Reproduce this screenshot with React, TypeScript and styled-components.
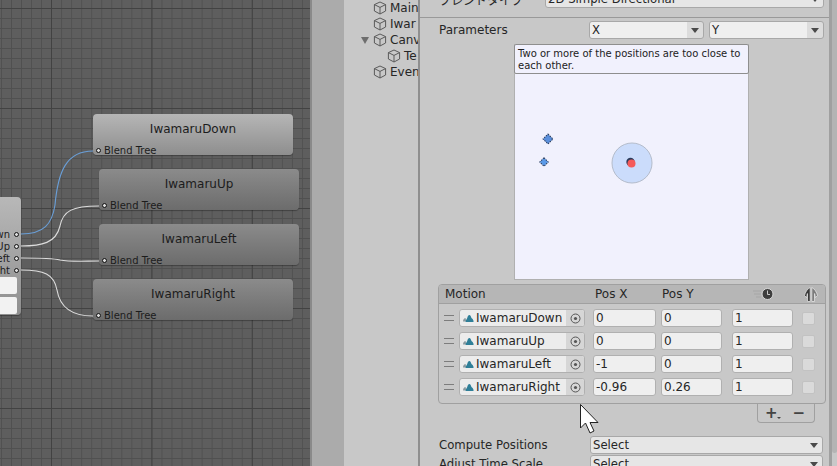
import React from "react";
import styled, { createGlobalStyle } from "styled-components";

const Global = createGlobalStyle`
  html, body { margin: 0; padding: 0; background: #c8c8c8; }
  body { font-family: "DejaVu Sans", "Noto Sans CJK JP", sans-serif; font-size: 12px; color: #262626; }
`;

const Page = styled.div`
  position: relative;
  display: flex;
  width: 837px;
  height: 466px;
  overflow: hidden;
`;

const Canvas = styled.div`
  position: relative;
  flex: 0 0 310px;
  height: 100%;
  overflow: hidden;
  background-color: #5e5e5e;
  background-image:
    linear-gradient(to right, #424242 1px, transparent 1px),
    linear-gradient(to bottom, #424242 1px, transparent 1px),
    linear-gradient(to right, #505050 1px, transparent 1px),
    linear-gradient(to bottom, #505050 1px, transparent 1px);
  background-size: 100.4px 100px, 100.4px 100px, 10.04px 10px, 10.04px 10px;
  background-position: 51px 8px, 51px 8px, 1px 8px, 1px 8px;
`;

const Wires = styled.svg`
  position: absolute;
  left: 0;
  top: 0;
  width: 310px;
  height: 466px;
  z-index: 2;
`;

const Node = styled.div<{ $x: number; $y: number; $active?: boolean }>`
  position: absolute;
  left: ${(p) => p.$x}px;
  top: ${(p) => p.$y}px;
  width: 200px;
  height: 41px;
  border-radius: 4px;
  background: ${(p) =>
    p.$active
      ? "linear-gradient(#b6b6b6, #8e8e8e)"
      : "linear-gradient(#8b8b8b, #6c6c6c)"};
  box-shadow: 0 1px 1px rgba(0, 0, 0, 0.3);
  color: #1c1c1c;
`;

const NodeTitle = styled.div`
  text-align: center;
  font-size: 12px;
  line-height: 16px;
  padding-top: 7px;
`;

const NodePort = styled.div`
  position: absolute;
  left: 3px;
  bottom: -2px;
  display: flex;
  align-items: center;
  gap: 3px;
  font-size: 10px;
  line-height: 13px;
  color: #1c1c1c;
`;

const Dot = styled.span`
  width: 3px;
  height: 3px;
  border: 1px solid #111;
  border-radius: 50%;
  background: #ddd;
  flex: none;
`;

const BaseNode = styled.div`
  position: absolute;
  left: -60px;
  top: 197px;
  width: 81px;
  height: 118px;
  box-sizing: border-box;
  padding: 31px 2px 0 0;
  border-radius: 4px;
  background: linear-gradient(#b8b8b8, #8f8f8f);
  box-shadow: 0 1px 1px rgba(0, 0, 0, 0.3);
  display: flex;
  flex-direction: column;
  align-items: flex-end;
`;

const OutPort = styled.div`
  display: flex;
  align-items: center;
  gap: 4px;
  height: 12px;
  font-size: 10px;
  color: #1c1c1c;
`;

const BaseField = styled.div`
  width: 77px;
  height: 17px;
  margin-top: 3px;
  border-radius: 2px;
  background: #f2f2f2;
  &:first-of-type { margin-top: 0; }
`;

const BaseFields = styled.div`
  display: flex;
  flex-direction: column;
  margin-top: 1px;
  margin-right: 2px;
`;

const Splitter = styled.div`
  flex: 0 0 2px;
  background: #8a8a8a;
`;

const Gutter = styled.div`
  flex: 0 0 32px;
  background: #ababab;
`;

const Hierarchy = styled.div`
  flex: 0 0 74px;
  box-sizing: border-box;
  background: #c8c8c8;
  overflow: hidden;
`;

const TreeRow = styled.div<{ $level?: number }>`
  display: flex;
  align-items: center;
  gap: 3px;
  height: 16px;
  padding-left: ${(p) => 29 + (p.$level ?? 0) * 14}px;
  position: relative;
  font-size: 12px;
  white-space: nowrap;
`;

const Arrow = styled.span`
  position: absolute;
  left: 17px;
  top: 5px;
  width: 0;
  height: 0;
  border-left: 4px solid transparent;
  border-right: 4px solid transparent;
  border-top: 7px solid #6e6e6e;
`;

const InspectorEdge = styled.div`
  flex: 0 0 2px;
  background: #8f8f8f;
`;

const Inspector = styled.div`
  flex: 0 0 409px;
  box-sizing: border-box;
  background: #c8c8c8;
  overflow: hidden;
  height: 100%;
`;

const TopRow = styled.div`
  display: flex;
  align-items: center;
  height: 18px;
  margin-top: -10px;
  padding: 0 5px 0 19px;
`;

const TopLabel = styled.div`
  flex: 0 0 106px;
  font-size: 12px;
`;

const Dropdown = styled.div<{ $w?: number }>`
  position: relative;
  box-sizing: border-box;
  flex: ${(p) => (p.$w ? `0 0 ${p.$w}px` : "1")};
  height: 18px;
  line-height: 16px;
  padding-left: 2px;
  border: 1px solid #a8a8a8;
  border-radius: 3px;
  background: #e6e6e6;
  font-size: 11.7px;
  white-space: nowrap;
  &::after {
    content: "";
    position: absolute;
    right: 4px;
    top: 6px;
    width: 0;
    height: 0;
    border-left: 4px solid transparent;
    border-right: 4px solid transparent;
    border-top: 5px solid #4a4a4a;
  }
`;

const ParamDropdown = styled(Dropdown)`
  background: linear-gradient(to right, #efefef calc(100% - 16px), #dcdcdc calc(100% - 16px));
`;

const Separator = styled.div`
  height: 1px;
  margin-top: 9px;
  background: #999;
`;

const ParamRow = styled.div`
  display: flex;
  align-items: center;
  gap: 5px;
  margin-top: 3px;
  height: 18px;
  padding: 0 6px 0 19px;
`;

const ParamLabel = styled.div`
  flex: 0 0 145px;
  font-size: 12px;
`;

const Graph = styled.div`
  position: relative;
  width: 235px;
  height: 236px;
  box-sizing: border-box;
  margin: 5px 0 0 94px;
  background: #f1f1fd;
  border: 1px solid #b0b0b0;
  border-width: 0 1px 1px 1px;
`;

const Message = styled.div`
  box-sizing: border-box;
  margin: 0 -1px;
  height: 30px;
  padding: 3px 3px 0;
  background: #f1f1fd;
  border: 1px solid #8e8e8e;
  border-radius: 2px;
  font-size: 10px;
  line-height: 12px;
  color: #222;
`;

const GraphDrawing = styled.svg`
  display: block;
  width: 233px;
  height: 205px;
`;

const List = styled.div`
  box-sizing: border-box;
  margin: 4px 0 0 18px;
  width: 388px;
  height: 120px;
  border: 1px solid #a0a0a0;
  border-radius: 4px;
`;

const ListHeader = styled.div`
  display: grid;
  grid-template-columns: 150px 67px 91px 51px 1fr;
  align-items: center;
  height: 18px;
  padding-left: 6px;
  background: #b6b6b6;
  border-bottom: 1px solid #a0a0a0;
  border-radius: 3px 3px 0 0;
  font-size: 12px;
`;

const HeaderIcon = styled.svg`
  display: block;
`;

const Rows = styled.div`
  display: flex;
  flex-direction: column;
  gap: 5px;
  padding-top: 5px;
`;

const Row = styled.div`
  display: flex;
  align-items: center;
  height: 18px;
  padding-left: 5px;
`;

const Handle = styled.span`
  display: block;
  flex: 0 0 10px;
  height: 6px;
  box-sizing: border-box;
  border-top: 1px solid #7d7d7d;
  border-bottom: 1px solid #7d7d7d;
`;

const MotionField = styled.div`
  display: flex;
  align-items: center;
  box-sizing: border-box;
  height: 18px;
  margin-left: 5px;
  flex: 0 0 126px;
  border: 1px solid #b0b0b0;
  border-radius: 3px;
  background: #ececec;
  font-size: 12px;
  overflow: hidden;
`;

const MotionName = styled.span`
  flex: 1;
  display: flex;
  align-items: center;
  gap: 1px;
  padding-left: 3px;
  white-space: nowrap;
  overflow: hidden;
`;

const Target = styled.span`
  flex: 0 0 18px;
  height: 100%;
  display: flex;
  align-items: center;
  justify-content: center;
  background: #d6d6d6;
`;

const NumField = styled.div<{ $ml: number; $w: number }>`
  box-sizing: border-box;
  flex: 0 0 ${(p) => p.$w}px;
  margin-left: ${(p) => p.$ml}px;
  height: 18px;
  line-height: 17px;
  padding-left: 2px;
  border: 1px solid #b0b0b0;
  border-radius: 3px;
  background: #efefef;
  font-size: 12px;
`;

const Check = styled.span`
  display: block;
  flex: 0 0 13px;
  height: 13px;
  margin-left: 9px;
  background: #dadada;
  border: 1px solid #c2c2c2;
  border-radius: 2px;
  box-sizing: border-box;
`;

const Footer = styled.div`
  box-sizing: border-box;
  display: flex;
  align-items: center;
  justify-content: center;
  gap: 15px;
  width: 58px;
  height: 19px;
  margin: 0 0 0 337px;
  padding-right: 2px;
  border: 1px solid #a0a0a0;
  border-top: 0;
  border-radius: 0 0 4px 4px;
  font-size: 15px;
  font-weight: 700;
  color: #444;
`;

const PlusMark = styled.span`
  position: relative;
  line-height: 14px;
  &::after {
    content: "";
    position: absolute;
    right: -3px;
    bottom: 1px;
    width: 0;
    height: 0;
    border-left: 2px solid transparent;
    border-right: 2px solid transparent;
    border-top: 2px solid #444;
  }
`;

const FormRow = styled.div<{ $mt: number }>`
  display: flex;
  align-items: center;
  height: 18px;
  margin-top: ${(p) => p.$mt}px;
  padding: 0 6px 0 19px;
`;

const FormLabel = styled.div`
  flex: 0 0 151px;
  font-size: 11.7px;
  white-space: nowrap;
`;

const RightBar = styled.div`
  flex: 0 0 3px;
  background: #a0a0a0;
`;

const RightEnd = styled.div`
  flex: 1;
  background: #c8c8c8;
`;

const Thumb = styled.div`
  height: 453px;
  background: #b4b4b4;
  border-radius: 0 0 3px 3px;
`;

const Cursor = styled.svg`
  position: absolute;
  left: 580px;
  top: 404px;
  z-index: 5;
`;

const Cube = () => (
  <svg width="14" height="14" viewBox="0 0 14 14" fill="none" stroke="#5a5a5a" strokeWidth="1" style={{ flex: "none" }}>
    <path d="M7 1 L12.6 3.6 V10 L7 13 L1.4 10 V3.6 Z" />
    <path d="M1.4 3.6 L7 6.4 L12.6 3.6 M7 6.4 V13" />
  </svg>
);

const MotionIcon = () => (
  <svg width="11" height="9" viewBox="0 0 13 10" style={{ flex: "none", marginRight: 1 }}>
    <path d="M0 8.5 C0 6 1.5 4.5 3 4.5 L4 8.5 Z" fill="#8a9aa0" />
    <path d="M3 9 C3.5 6.5 4.5 6 5 4.5 C5.5 2.5 6.5 1 7.5 1 C8.8 1 9.5 3 10 4.5 C11.5 5.5 12.5 7 12.5 9 Z" fill="#2f7f98" />
  </svg>
);

const TargetIcon = () => (
  <svg width="11" height="11" viewBox="0 0 11 11" fill="none">
    <circle cx="5.5" cy="5.5" r="4.5" stroke="#555" />
    <circle cx="5.5" cy="5.5" r="1.6" fill="#555" />
  </svg>
);

const SpeedIcon = () => (
  <HeaderIcon width="21" height="12" viewBox="0 0 21 12">
    <path d="M0 3 H8 M1 6 H8 M3 9 H8" stroke="#a6a6a6" strokeWidth="1" />
    <circle cx="14.5" cy="6" r="5.5" fill="#3e3e3e" stroke="#d8d8d8" strokeWidth="1" />
    <path d="M14.5 2.5 V6.5 H17" stroke="#c8c8c8" strokeWidth="1" fill="none" />
  </HeaderIcon>
);

const MirrorIcon = () => (
  <HeaderIcon width="14" height="15" viewBox="0 0 14 15">
    <path d="M6.2 0.5 C3.4 1.6 1.2 5.4 0.5 8.5 L2.6 10.5 L3.4 6.5 L3.6 14.5 H6.2 Z" fill="#3a3a3a" stroke="#efefef" strokeWidth="0.7" />
    <path d="M7.8 0.5 C10.6 1.6 12.8 5.4 13.5 8.5 L11.4 10.5 L10.6 6.5 L10.4 14.5 H7.8 Z" fill="#7c7c7c" stroke="#efefef" strokeWidth="0.7" />
  </HeaderIcon>
);

const motions = [
  { name: "IwamaruDown", x: "0", y: "0" },
  { name: "IwamaruUp", x: "0", y: "0" },
  { name: "IwamaruLeft", x: "-1", y: "0" },
  { name: "IwamaruRight", x: "-0.96", y: "0.26" },
];

const nodes = [
  { name: "IwamaruDown", x: 93, y: 114, active: true },
  { name: "IwamaruUp", x: 99, y: 169 },
  { name: "IwamaruLeft", x: 99, y: 224 },
  { name: "IwamaruRight", x: 93, y: 279 },
];

export default function App() {
  return (
    <Page>
      <Global />
      <Canvas>
        {nodes.map((n) => (
          <Node key={n.name} $x={n.x} $y={n.y} $active={n.active}>
            <NodeTitle>{n.name}</NodeTitle>
            <NodePort>
              <Dot />
              Blend Tree
            </NodePort>
          </Node>
        ))}
        <BaseNode>
          <OutPort>own<Dot /></OutPort>
          <OutPort>Up<Dot /></OutPort>
          <OutPort>eft<Dot /></OutPort>
          <OutPort>ght<Dot /></OutPort>
          <BaseFields>
            <BaseField />
            <BaseField />
          </BaseFields>
        </BaseNode>
        <Wires viewBox="0 0 310 466" fill="none" strokeWidth="1.1">
          <path d="M21 234 C 44 234 52 224 55 205 C 58 172 66 151 93 151" stroke="#6a9fd8" />
          <path d="M21 246 C 42 246 56 243 60 226 C 63 211 72 206 99 206" stroke="#dcdcdc" />
          <path d="M21 258 C 44 258 52 258 60 260 C 70 262 85 261 99 261" stroke="#dcdcdc" />
          <path d="M21 270 C 44 270 54 274 57 290 C 60 308 72 316 93 316" stroke="#dcdcdc" />
        </Wires>
      </Canvas>
      <Splitter />
      <Gutter />
      <Hierarchy>
        <TreeRow><Cube />Main</TreeRow>
        <TreeRow><Cube />Iwar</TreeRow>
        <TreeRow><Arrow /><Cube />Canv</TreeRow>
        <TreeRow $level={1}><Cube />Te</TreeRow>
        <TreeRow><Cube />Even</TreeRow>
      </Hierarchy>
      <InspectorEdge />
      <Inspector>
        <TopRow>
          <TopLabel>ブレンドタイプ</TopLabel>
          <Dropdown>2D Simple Directional</Dropdown>
        </TopRow>
        <Separator />
        <ParamRow>
          <ParamLabel>Parameters</ParamLabel>
          <ParamDropdown $w={115}>X</ParamDropdown>
          <ParamDropdown $w={115}>Y</ParamDropdown>
        </ParamRow>
        <Graph>
          <Message>Two or more of the positions are too close to each other.</Message>
          <GraphDrawing viewBox="0 0 233 205">
            <circle cx="117" cy="89" r="20" fill="#cbdcfb" stroke="#b4bccb" />
            <rect x="-3.5" y="-3.5" width="7" height="7" transform="translate(33 65) rotate(45)" fill="#5b8fdc" stroke="#2a3c5c" strokeDasharray="1.5 1" />
            <rect x="-3" y="-3" width="6" height="6" transform="translate(29 88) rotate(45)" fill="#5b9ae8" stroke="#2a3c5c" strokeDasharray="1.5 1" />
            <circle cx="115.5" cy="88" r="4.2" fill="#2a3c5c" />
            <circle cx="116.5" cy="89.5" r="4" fill="#f55a5a" />
          </GraphDrawing>
        </Graph>
        <List>
          <ListHeader>
            <span>Motion</span>
            <span>Pos X</span>
            <span>Pos Y</span>
            <SpeedIcon />
            <MirrorIcon />
          </ListHeader>
          <Rows>
            {motions.map((m) => (
              <Row key={m.name}>
                <Handle />
                <MotionField>
                  <MotionName><MotionIcon />{m.name}</MotionName>
                  <Target><TargetIcon /></Target>
                </MotionField>
                <NumField $ml={8} $w={63}>{m.x}</NumField>
                <NumField $ml={5} $w={61}>{m.y}</NumField>
                <NumField $ml={10} $w={61}>1</NumField>
                <Check />
              </Row>
            ))}
          </Rows>
        </List>
        <Footer>
          <PlusMark>+</PlusMark>
          <span>−</span>
        </Footer>
        <FormRow $mt={13}>
          <FormLabel>Compute Positions</FormLabel>
          <Dropdown>Select</Dropdown>
        </FormRow>
        <FormRow $mt={1}>
          <FormLabel>Adjust Time Scale</FormLabel>
          <Dropdown>Select</Dropdown>
        </FormRow>
      </Inspector>
      <RightBar />
      <RightEnd><Thumb /></RightEnd>
      <Cursor width="20" height="30" viewBox="0 0 20 30">
        <path d="M0.5 0.5 V24 L5.5 19 L10 29 L14 27 L10 18.5 H18 Z" fill="#fff" stroke="#222" strokeWidth="1" />
      </Cursor>
    </Page>
  );
}
